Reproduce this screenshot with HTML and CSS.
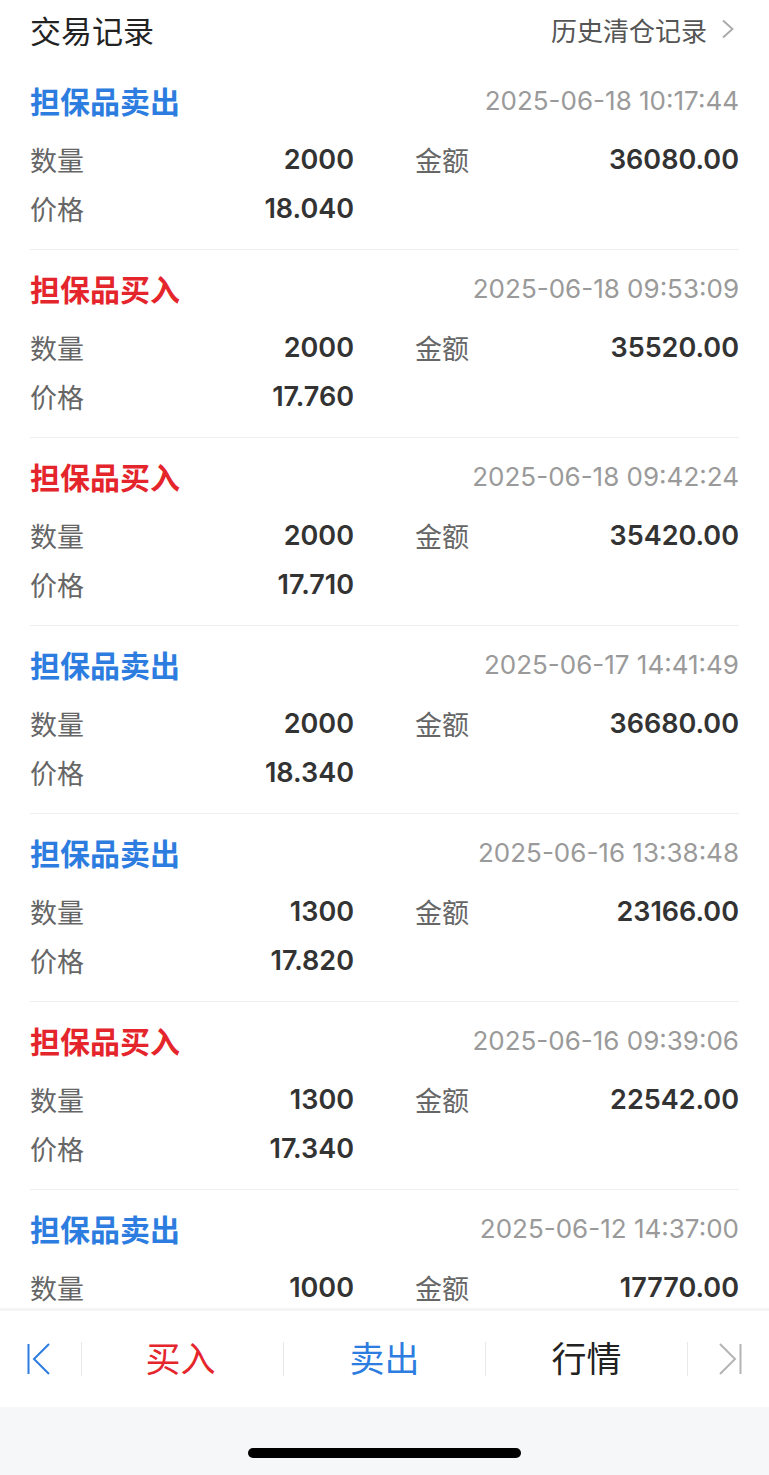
FILE: index.html
```html
<!DOCTYPE html>
<html>
<head>
	<meta charset="utf-8">
	<title>交易记录</title>
	<link rel="stylesheet" href="styles.css">
</head>
<body>
	<div class="page">
		<div class="header">
			<h1>交易记录</h1>
			<a class="history" href="#">历史清仓记录
				<svg width="14" height="20" viewBox="0 0 14 20"><path d="M2 1.5 L11.5 10 L2 18.5" fill="none" stroke="#a8a8a8" stroke-width="1.8"/></svg>
			</a>
		</div>

		<div class="list">
			<div class="record">
				<div class="record-head">
					<span class="type sell">担保品卖出</span>
					<span class="time">2025-06-18 10:17:44</span>
				</div>
				<div class="record-body">
					<div class="cell"><span class="label">数量</span><span class="value">2000</span></div>
					<div class="cell"><span class="label">金额</span><span class="value">36080.00</span></div>
					<div class="cell"><span class="label">价格</span><span class="value">18.040</span></div>
				</div>
			</div>

			<div class="record">
				<div class="record-head">
					<span class="type buy">担保品买入</span>
					<span class="time">2025-06-18 09:53:09</span>
				</div>
				<div class="record-body">
					<div class="cell"><span class="label">数量</span><span class="value">2000</span></div>
					<div class="cell"><span class="label">金额</span><span class="value">35520.00</span></div>
					<div class="cell"><span class="label">价格</span><span class="value">17.760</span></div>
				</div>
			</div>

			<div class="record">
				<div class="record-head">
					<span class="type buy">担保品买入</span>
					<span class="time">2025-06-18 09:42:24</span>
				</div>
				<div class="record-body">
					<div class="cell"><span class="label">数量</span><span class="value">2000</span></div>
					<div class="cell"><span class="label">金额</span><span class="value">35420.00</span></div>
					<div class="cell"><span class="label">价格</span><span class="value">17.710</span></div>
				</div>
			</div>

			<div class="record">
				<div class="record-head">
					<span class="type sell">担保品卖出</span>
					<span class="time">2025-06-17 14:41:49</span>
				</div>
				<div class="record-body">
					<div class="cell"><span class="label">数量</span><span class="value">2000</span></div>
					<div class="cell"><span class="label">金额</span><span class="value">36680.00</span></div>
					<div class="cell"><span class="label">价格</span><span class="value">18.340</span></div>
				</div>
			</div>

			<div class="record">
				<div class="record-head">
					<span class="type sell">担保品卖出</span>
					<span class="time">2025-06-16 13:38:48</span>
				</div>
				<div class="record-body">
					<div class="cell"><span class="label">数量</span><span class="value">1300</span></div>
					<div class="cell"><span class="label">金额</span><span class="value">23166.00</span></div>
					<div class="cell"><span class="label">价格</span><span class="value">17.820</span></div>
				</div>
			</div>

			<div class="record">
				<div class="record-head">
					<span class="type buy">担保品买入</span>
					<span class="time">2025-06-16 09:39:06</span>
				</div>
				<div class="record-body">
					<div class="cell"><span class="label">数量</span><span class="value">1300</span></div>
					<div class="cell"><span class="label">金额</span><span class="value">22542.00</span></div>
					<div class="cell"><span class="label">价格</span><span class="value">17.340</span></div>
				</div>
			</div>

			<div class="record">
				<div class="record-head">
					<span class="type sell">担保品卖出</span>
					<span class="time">2025-06-12 14:37:00</span>
				</div>
				<div class="record-body">
					<div class="cell"><span class="label">数量</span><span class="value">1000</span></div>
					<div class="cell"><span class="label">金额</span><span class="value">17770.00</span></div>
				</div>
			</div>
		</div>

		<div class="nav">
			<div class="nav-item first">
				<svg width="24" height="32" viewBox="0 0 24 32"><path d="M1.5 1 V31 M22 1 L7 16 L22 31" fill="none" stroke="#2d7de0" stroke-width="2"/></svg>
			</div>
			<span class="sep"></span>
			<div class="nav-item buy">买入</div>
			<span class="sep"></span>
			<div class="nav-item sell">卖出</div>
			<span class="sep"></span>
			<div class="nav-item">行情</div>
			<span class="sep"></span>
			<div class="nav-item last">
				<svg width="24" height="32" viewBox="0 0 24 32"><path d="M22.5 1 V31 M2 1 L17 16 L2 31" fill="none" stroke="#b4b4b4" stroke-width="2"/></svg>
			</div>
		</div>

		<div class="home-area">
			<div class="home-bar"></div>
		</div>
	</div>
</body>
</html>
```

FILE: styles.css
```css
body {
	margin: 0;
	background-color: #fff;
	font-family: "Inter", "Noto Sans CJK SC", sans-serif;
	color: #222;
}

.page {
	display: flex;
	flex-direction: column;
	height: 100vh;
}

.header {
	display: flex;
	justify-content: space-between;
	align-items: center;
	height: 58px;
	padding: 0 30px 4px;
	flex-shrink: 0;
}

h1 {
	margin: 0;
	font-size: 31px;
	font-weight: normal;
	color: #222;
}

.history {
	display: flex;
	align-items: center;
	gap: 14px;
	margin-right: 4px;
	font-size: 26px;
	color: #555;
	text-decoration: none;
}

.list {
	flex: 1;
	overflow: hidden;
	padding: 0 30px;
}

.record {
	padding: 16px 0 16px;
	border-bottom: 1px solid #efefef;
}

.record-head {
	display: flex;
	justify-content: space-between;
	align-items: center;
	height: 44px;
}

.type {
	font-size: 30px;
	font-weight: bold;
}

.type.sell {
	color: #2d7de0;
}

.type.buy {
	color: #e5252c;
}

.time {
	font-size: 26px;
	color: #9a9a9a;
}

.record-body {
	display: grid;
	grid-template-columns: 1fr 1fr;
	column-gap: 61px;
	margin-top: 13px;
}

.cell {
	display: flex;
	justify-content: space-between;
	align-items: center;
	height: 49px;
}

.label {
	font-size: 27px;
	color: #666;
}

.value {
	font-size: 27px;
	font-weight: 600;
	color: #333;
}

.nav {
	display: grid;
	grid-template-columns: 54px 1px 1fr 1px 1fr 1px 1fr 1px 54px;
	align-items: center;
	height: 96px;
	padding: 0 27px;
	border-top: 3px solid #f4f4f4;
	flex-shrink: 0;
}

.sep {
	height: 34px;
	background-color: #e8e8e8;
}

.nav-item {
	display: flex;
	justify-content: center;
	align-items: center;
	padding-bottom: 5px;
	font-size: 35px;
	color: #222;
}

.nav-item.first,
.nav-item.last {
	padding-bottom: 0;
}

.nav-item.first {
	justify-content: flex-start;
}

.nav-item.last {
	justify-content: flex-end;
}

.nav-item.buy {
	color: #e5252c;
	padding-right: 4px;
}

.nav-item.sell {
	color: #2d7de0;
}

.home-area {
	height: 68px;
	background-color: #f6f7f9;
	display: flex;
	justify-content: center;
	padding-top: 41px;
	box-sizing: border-box;
	flex-shrink: 0;
}

.home-bar {
	width: 273px;
	height: 10px;
	border-radius: 5px;
	background-color: #000;
}
```
